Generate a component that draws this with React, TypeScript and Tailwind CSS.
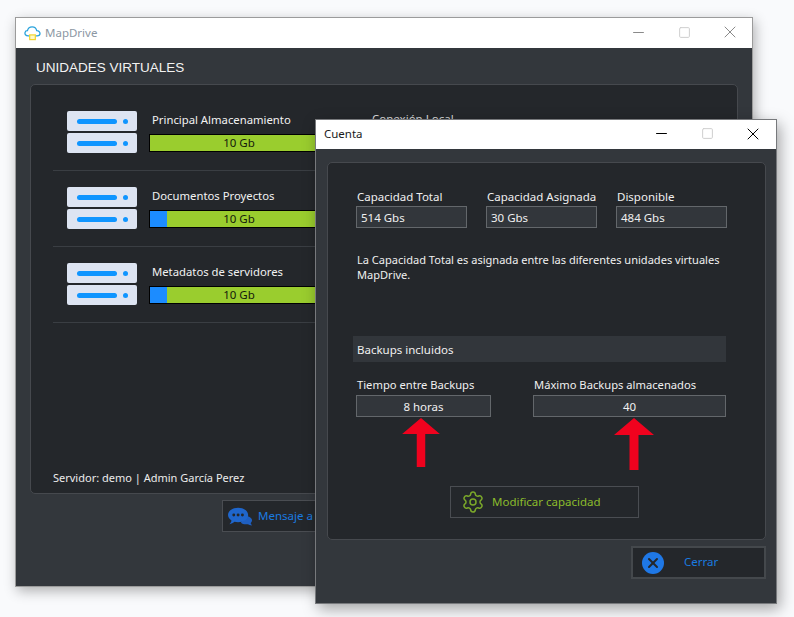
import { Settings, X, Minus, Square } from "lucide-react";

const units = [
  { name: "Principal Almacenamiento", used: 0 },
  { name: "Documentos Proyectos", used: 17 },
  { name: "Metadatos de servidores", used: 17 },
];

function ServerSlot() {
  return (
    <div className="flex h-5 w-[70px] items-center rounded-[2px] bg-[#dde4f2] pl-[10px]">
      <div className="h-[5px] w-10 rounded-full bg-[#0f95ff]" />
      <div className="ml-[6px] h-[5px] w-[5px] rounded-full bg-[#0f95ff]" />
    </div>
  );
}

function UnitRow({ name, used }: { name: string; used: number }) {
  return (
    <div className="flex h-[76px] border-b border-[#3a3e43] pl-[14px] pt-[16px]">
      <div className="flex flex-col gap-[2px]">
        <ServerSlot />
        <ServerSlot />
      </div>
      <div className="ml-3 w-[180px]">
        <div className="h-[23px] pl-[3px] text-[11.3px] leading-[18px] text-[#f2f2f2]">{name}</div>
        <div className="relative h-[18px] border border-black bg-[#9acd2e] text-center text-[11.5px] leading-[16px] text-[#15190c]">
          {used > 0 && <div className="absolute inset-y-0 left-0 bg-[#1c8cff]" style={{ width: used }} />}
          <span className="relative">10 Gb</span>
        </div>
      </div>
      <div className="ml-[43px] -mt-px text-[11.5px] leading-[18px] text-[#d8d8d8]">{used === 0 ? "Conexión Local" : ""}</div>
    </div>
  );
}

function Field({ label, value, className }: { label: string; value: string; className: string }) {
  return (
    <div className={className}>
      <div className="h-[17px] pl-px text-[11.5px] leading-[16px] text-[#f0f0f0]">{label}</div>
      <div className="h-[22px] border border-[#63676b] bg-[#32363b] pl-1 text-[11.5px] leading-[21px] text-[#f0f0f0]">{value}</div>
    </div>
  );
}

function CenterField({ label, value, className }: { label: string; value: string; className: string }) {
  return (
    <div className={className}>
      <div className="h-[18px] pl-px text-[11.2px] leading-[16px] text-[#f0f0f0]">{label}</div>
      <div className="h-[22px] border border-[#63676b] bg-[#32363b] text-center text-[11.5px] leading-[21px] text-[#f0f0f0]">{value}</div>
    </div>
  );
}

function WindowButtons({ muted }: { muted?: boolean }) {
  return (
    <div className={muted ? "-mr-px ml-auto flex items-center pb-[2px]" : "ml-auto flex items-center pb-[2px]"}>
      <div className="flex w-[45px] justify-center">
        <Minus size={17} strokeWidth={1} absoluteStrokeWidth className={muted ? "text-[#8a8a8a]" : "text-black"} />
      </div>
      <div className="flex w-[46px] justify-center">
        <Square size={13} strokeWidth={1} absoluteStrokeWidth className="text-[#cfcfcf]" />
      </div>
      <div className="flex w-[46px] justify-center">
        <X size={20} strokeWidth={1} absoluteStrokeWidth className={muted ? "text-[#8a8a8a]" : "text-black"} />
      </div>
    </div>
  );
}

function Arrow({ className }: { className: string }) {
  return (
    <svg viewBox="0 0 40 52" className={className}>
      <path d="M20 0 L40 17 H24.5 V52 H15.5 V17 H0 Z" fill="#f0021e" />
    </svg>
  );
}

export default function App() {
  return (
    <div className="relative h-[617px] w-[794px] overflow-hidden bg-[#f9fafc] font-['Noto_Sans','Open_Sans',sans-serif]">
      {/* main window */}
      <div className="absolute left-[15px] top-[17px] flex h-[570px] w-[738px] flex-col border border-[#9b9b9b] bg-[#33373c] shadow-[2px_4px_12px_rgba(0,0,0,0.3)]">
        <div className="flex h-[30px] items-center bg-white pl-2">
          <svg viewBox="0 0 18 16" className="h-[15px] w-[17px]">
            <path d="M4.5 10.5 C1.5 10.5 0.7 8.5 1 7 C1.3 5.6 2.5 5 3.6 5 C4.2 2.6 6.2 1 8.6 1 C11.2 1 13 2.8 13.5 5 C15.5 4.9 17 6.2 17 8 C17 9.6 15.8 10.5 14 10.5 H4.5 Z" fill="none" stroke="#2aa3dc" strokeWidth="1.4" />
            <rect x="6" y="9.5" width="6" height="5" fill="#fff8c8" stroke="#f2d52e" strokeWidth="1.3" />
          </svg>
          <span className="ml-[4px] -mt-px text-[11.5px] text-[#8c97a3]">MapDrive</span>
          <WindowButtons muted />
        </div>
        <div className="flex h-[36px] items-center pl-5 pt-[5px] font-['Liberation_Sans',sans-serif] text-[13.5px] text-[#f2f2f2]">
          UNIDADES VIRTUALES
        </div>
        <div className="relative mx-[14px] h-[410px] rounded-[5px] border border-[#46494e] bg-[#24272b] pl-[22px] pr-[22px] pt-[10px]">
          {units.map((u) => (
            <UnitRow key={u.name} name={u.name} used={u.used} />
          ))}
          <div className="absolute bottom-[6px] left-[22px] text-[11px] leading-[18px] text-[#ececec]">
            Servidor: demo | Admin García Perez
          </div>
        </div>
        <div className="ml-[206px] mt-[6px] flex h-[32px] w-[300px] items-center border border-[#4a4d52] bg-[#24272b] pl-[5px]">
          <svg viewBox="0 0 26 19" className="h-[19px] w-[25px]">
            <path d="M17 9 C21 9 25 10.500 25 13.500 C25 15 24 16 23.500 16.500 L25 18.800 C23 18.600 21.500 18 20.500 17.500 C18 18 15 17.500 13.500 16 Z" fill="#1f5fc0" />
            <path d="M10.500 0.500 C16 0.500 21 3.500 21 8 C21 12.500 16 15.500 10.500 15.500 C9 15.500 7.800 15.300 6.800 15 C5.500 16.200 3.500 17.300 1.500 17.500 C2.800 16.300 3.500 15 3.600 13.700 C1.500 12.300 0 10.300 0 8 C0 3.500 5 0.500 10.500 0.500 Z" fill="#1f66cc" />
            <circle cx="6" cy="8" r="1.500" fill="#24272b" />
            <circle cx="10.500" cy="8" r="1.500" fill="#24272b" />
            <circle cx="15" cy="8" r="1.500" fill="#24272b" />
          </svg>
          <span className="ml-[5px] text-[11.5px] text-[#1a7be0]">Mensaje a Soporte</span>
        </div>
      </div>

      {/* account dialog */}
      <div className="absolute left-[315px] top-[119px] flex h-[485px] w-[462px] flex-col border border-[#77797c] bg-[#33373c] shadow-[3px_5px_14px_rgba(0,0,0,0.35)]">
        <div className="flex h-[29px] items-center bg-white pl-2">
          <span className="-mt-px text-[11.5px] text-[#1a1a1a]">Cuenta</span>
          <WindowButtons />
        </div>
        <div className="relative ml-[11px] mt-[13px] h-[378px] w-[439px] rounded-[5px] border border-[#46494e] bg-[#24272b]">
          <div className="ml-[28px] mt-[26px] flex gap-[19px]">
            <Field label="Capacidad Total" value="514 Gbs" className="w-[111px]" />
            <Field label="Capacidad Asignada" value="30 Gbs" className="w-[111px]" />
            <Field label="Disponible" value="484 Gbs" className="w-[111px]" />
          </div>
          <p className="ml-[29px] mt-[24px] w-[385px] text-[11.05px] leading-[15px] text-[#f0f0f0]">
            La Capacidad Total es asignada entre las diferentes unidades virtuales MapDrive.
          </p>
          <div className="ml-[25px] mt-[54px] flex h-[26px] w-[373px] items-center bg-[#32363b] pl-1 pt-[2px] text-[11.5px] text-[#f0f0f0]">
            Backups incluidos
          </div>
          <div className="ml-[28px] mt-[15px] flex gap-[42px]">
            <CenterField label="Tiempo entre Backups" value="8 horas" className="w-[135px]" />
            <CenterField label="Máximo Backups almacenados" value="40" className="w-[193px]" />
          </div>
          <div className="ml-[122px] mt-[69px] flex h-[32px] w-[189px] items-center border border-[#4a4d52] pl-[10px] text-[11.5px] text-[#8bbb2c]">
            <Settings size={24} strokeWidth={1.5} absoluteStrokeWidth className="text-[#7ba82a]" />
            <span className="ml-[7px]">Modificar capacidad</span>
          </div>
          <Arrow className="absolute left-[73px] top-[255px] h-[49px] w-[40px]" />
          <Arrow className="absolute left-[286px] top-[255px] h-[52px] w-[40px]" />
        </div>
        <div className="ml-auto mr-[10px] mt-[6px] flex h-[33px] w-[135px] items-center border-2 border-[#44484c] bg-[#24272b] pl-[9px]">
          <div className="flex h-[22px] w-[22px] items-center justify-center rounded-full bg-[#1f78e6]">
            <X size={16} strokeWidth={3} className="text-[#24272b]" />
          </div>
          <span className="ml-[20px] -mt-px text-[11.5px] text-[#1a7be0]">Cerrar</span>
        </div>
      </div>
    </div>
  );
}
